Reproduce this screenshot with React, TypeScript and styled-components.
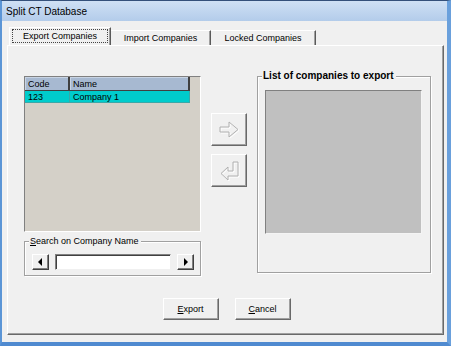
import React from "react";
import styled, { createGlobalStyle } from "styled-components";

const GlobalStyle = createGlobalStyle`
  html, body { margin: 0; padding: 0; background: #ffffff; }
  body { font-family: "Liberation Sans", Arial, sans-serif; }
`;

const Window = styled.div`
  width: 451px;
  height: 346px;
  box-sizing: border-box;
  display: flex;
  flex-direction: column;
  background: #f0f0f0;
  border-top: 1px solid #34507a;
  border-left: 2px solid #5b95d6;
  border-right: 4px solid #6aa0dc;
  border-bottom: 4px solid #4f8ad0;
`;

const TitleBar = styled.div`
  height: 20px;
  flex: none;
  display: flex;
  align-items: center;
  padding-left: 4px;
  background: linear-gradient(#cfe0f4, #b3ccea);
  font-size: 10px;
  color: #000;
`;

const Body = styled.div`
  flex: 1;
  display: flex;
  flex-direction: column;
  padding: 6px 3px 0 5px;
`;

const TabStrip = styled.div`
  height: 18px;
  display: flex;
  align-items: flex-end;
  padding-left: 2px;
`;

const Tab = styled.div<{ $active?: boolean; $w: number }>`
  width: ${(p) => p.$w}px;
  height: ${(p) => (p.$active ? 18 : 15)}px;
  box-sizing: border-box;
  display: flex;
  align-items: center;
  justify-content: center;
  font-size: 9px;
  color: #000;
  border-top: 1px solid #ffffff;
  border-left: ${(p) => (p.$active ? "1px solid #ffffff" : "none")};
  border-right: 1px solid #5a5a5a;
  box-shadow: inset -1px 0 #a0a0a0;
  padding-bottom: ${(p) => (p.$active ? 2 : 0)}px;
`;

const FocusLabel = styled.span`
  width: calc(100% - 4px);
  height: 14px;
  box-sizing: border-box;
  display: flex;
  align-items: center;
  justify-content: center;
  border: 1px dotted #444;
`;

const Panel = styled.div`
  height: 290px;
  box-sizing: border-box;
  display: flex;
  flex-direction: column;
  border-top: 1px solid #ffffff;
  border-left: 1px solid #ffffff;
  border-right: 1px solid #696969;
  border-bottom: 1px solid #696969;
  box-shadow: inset -1px -1px #a0a0a0;
  padding: 30px 0 0 16px;
`;

const ContentRow = styled.div`
  display: flex;
  align-items: flex-start;
`;

const LeftColumn = styled.div`
  width: 177px;
  display: flex;
  flex-direction: column;
  gap: 9px;
`;

const ListBox = styled.div`
  width: 177px;
  height: 156px;
  box-sizing: border-box;
  background: #d4d0c8;
  border-top: 1px solid #808080;
  border-left: 1px solid #808080;
  border-right: 1px solid #ffffff;
  border-bottom: 1px solid #ffffff;
`;

const GridRow = styled.div<{ $header?: boolean }>`
  display: flex;
  width: 165px;
  height: ${(p) => (p.$header ? 14 : 12)}px;
  background: ${(p) => (p.$header ? "#a7b9d1" : "#00cccc")};
  font-size: 9px;
  color: #000;
`;

const GridCell = styled.div<{ $w: number; $header?: boolean }>`
  width: ${(p) => p.$w}px;
  box-sizing: border-box;
  display: flex;
  align-items: center;
  padding-left: 3px;
  border-right: ${(p) => (p.$header ? "2px solid #404040" : "1px solid #3aa8a8")};
  border-bottom: ${(p) => (p.$header ? "1px solid #404040" : "1px solid #3aa8a8")};
  box-shadow: ${(p) => (p.$header ? "inset 1px 1px #c8d4e4" : "none")};
`;

const GroupBox = styled.div<{ $w: number; $h: number }>`
  position: relative;
  width: ${(p) => p.$w}px;
  height: ${(p) => p.$h}px;
  box-sizing: border-box;
  border: 1px solid #a0a0a0;
  box-shadow: inset 1px 1px #ffffff, 1px 1px #ffffff;
`;

const GroupCaption = styled.span<{ $bold?: boolean }>`
  position: absolute;
  left: 4px;
  top: -7px;
  padding: 0 2px 0 1px;
  background: #f0f0f0;
  font-size: ${(p) => (p.$bold ? 10 : 9)}px;
  font-weight: ${(p) => (p.$bold ? 700 : 400)};
  line-height: 12px;
  color: #000;
`;

const SearchRow = styled.div`
  display: flex;
  gap: 6px;
  padding: 12px 0 0 7px;
`;

const ScrollButton = styled.div`
  width: 17px;
  height: 16px;
  box-sizing: border-box;
  display: flex;
  align-items: center;
  justify-content: center;
  background: #f0f0f0;
  border: 1px solid;
  border-color: #ffffff #404040 #404040 #ffffff;
  box-shadow: inset -1px -1px #808080;
`;

const TextBox = styled.div`
  width: 116px;
  height: 16px;
  box-sizing: border-box;
  background: #ffffff;
  border: 1px solid;
  border-color: #808080 #f0f0f0 #f0f0f0 #808080;
  box-shadow: inset 1px 1px #404040;
`;

const MoveColumn = styled.div`
  display: flex;
  flex-direction: column;
  gap: 8px;
  margin: 37px 10px 0 10px;
`;

const MoveButton = styled.div`
  width: 36px;
  height: 33px;
  box-sizing: border-box;
  display: flex;
  align-items: center;
  justify-content: center;
  background: #f0f0f0;
  border: 1px solid;
  border-color: #ffffff #696969 #696969 #ffffff;
  box-shadow: inset -1px -1px #a0a0a0;
`;

const ExportList = styled.div`
  width: 157px;
  height: 144px;
  box-sizing: border-box;
  margin: 13px 0 0 7px;
  background: #c0c0c0;
  border: 1px solid;
  border-color: #808080 #f4f4f4 #f4f4f4 #808080;
`;

const ButtonRow = styled.div`
  display: flex;
  justify-content: center;
  gap: 16px;
  margin-top: 22px;
  padding-right: 14px;
`;

const PushButton = styled.div`
  width: 56px;
  height: 22px;
  box-sizing: border-box;
  display: flex;
  align-items: center;
  justify-content: center;
  background: #f0f0f0;
  font-size: 9px;
  color: #000;
  border: 1px solid;
  border-color: #ffffff #696969 #696969 #ffffff;
  box-shadow: inset -1px -1px #a0a0a0;
`;

const Triangle = ({ dir }: { dir: "left" | "right" }) => (
  <svg width="5" height="8" viewBox="0 0 5 8">
    <polygon points={dir === "left" ? "4,0 4,8 0,4" : "1,0 1,8 5,4"} fill="#000" />
  </svg>
);

const ArrowRight = () => (
  <svg width="34" height="31" viewBox="0 0 34 31">
    <g fill="none" strokeWidth="1">
      <polygon points="8,13 17,13 17,8 26,15.5 17,23 17,18 8,18" stroke="#ffffff" transform="translate(1,1)" />
      <polygon points="8,13 17,13 17,8 26,15.5 17,23 17,18 8,18" stroke="#b0b0b0" />
    </g>
  </svg>
);

const ArrowLeft = () => (
  <svg width="34" height="31" viewBox="0 0 34 31">
    <g fill="none" strokeWidth="1">
      <polygon points="21,7 26,7 26,21 16,21 16,25 9,18.5 16,12 16,16 21,16" stroke="#ffffff" transform="translate(1,1)" />
      <polygon points="21,7 26,7 26,21 16,21 16,25 9,18.5 16,12 16,16 21,16" stroke="#b0b0b0" />
    </g>
  </svg>
);

export default function App() {
  return (
    <>
      <GlobalStyle />
      <Window>
        <TitleBar>Split CT Database</TitleBar>
        <Body>
          <TabStrip>
            <Tab $active $w={102}>
              <FocusLabel>Export Companies</FocusLabel>
            </Tab>
            <Tab $w={100}>Import Companies</Tab>
            <Tab $w={105}>Locked Companies</Tab>
          </TabStrip>
          <Panel>
            <ContentRow>
              <LeftColumn>
                <ListBox>
                  <GridRow $header>
                    <GridCell $header $w={45}>Code</GridCell>
                    <GridCell $header $w={120}>Name</GridCell>
                  </GridRow>
                  <GridRow>
                    <GridCell $w={45}>123</GridCell>
                    <GridCell $w={120}>Company 1</GridCell>
                  </GridRow>
                </ListBox>
                <GroupBox $w={177} $h={35}>
                  <GroupCaption>
                    <u>S</u>earch on Company Name
                  </GroupCaption>
                  <SearchRow>
                    <ScrollButton>
                      <Triangle dir="left" />
                    </ScrollButton>
                    <TextBox />
                    <ScrollButton>
                      <Triangle dir="right" />
                    </ScrollButton>
                  </SearchRow>
                </GroupBox>
              </LeftColumn>
              <MoveColumn>
                <MoveButton>
                  <ArrowRight />
                </MoveButton>
                <MoveButton>
                  <ArrowLeft />
                </MoveButton>
              </MoveColumn>
              <GroupBox $w={174} $h={197}>
                <GroupCaption $bold>List of companies to export</GroupCaption>
                <ExportList />
              </GroupBox>
            </ContentRow>
            <ButtonRow>
              <PushButton>
                <u>E</u>xport
              </PushButton>
              <PushButton>
                <u>C</u>ancel
              </PushButton>
            </ButtonRow>
          </Panel>
        </Body>
      </Window>
    </>
  );
}
